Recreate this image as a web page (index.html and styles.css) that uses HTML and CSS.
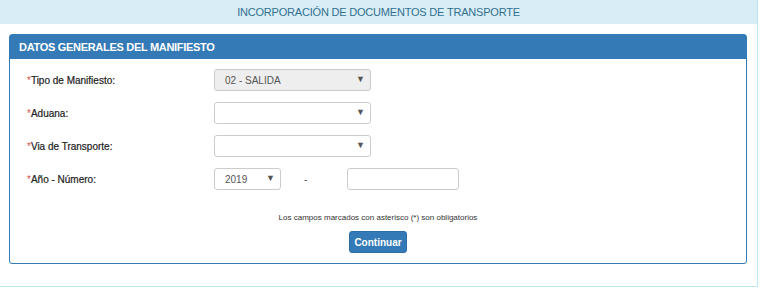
FILE: index.html
```html
<!DOCTYPE html>
<html lang="es">
<head>
    <meta charset="UTF-8">
    <title>Incorporación de Documentos de Transporte</title>
    <link rel="stylesheet" href="styles.css">
</head>
<body>

<div class="page">
    <div class="page-heading">INCORPORACIÓN DE DOCUMENTOS DE TRANSPORTE</div>

    <div class="page-body">
        <div class="card">
            <div class="card-heading">DATOS GENERALES DEL MANIFIESTO</div>

            <form class="card-body" id="manifiesto">
                <div class="row">
                    <label for="tipo"><span class="req">*</span>Tipo de Manifiesto:</label>
                    <div class="select wide">
                        <select id="tipo" disabled>
                            <option>02 - SALIDA</option>
                        </select>
                    </div>
                </div>

                <div class="row">
                    <label for="aduana"><span class="req">*</span>Aduana:</label>
                    <div class="select wide">
                        <select id="aduana">
                            <option></option>
                        </select>
                    </div>
                </div>

                <div class="row">
                    <label for="via"><span class="req">*</span>Via de Transporte:</label>
                    <div class="select wide">
                        <select id="via">
                            <option></option>
                        </select>
                    </div>
                </div>

                <div class="row">
                    <label for="anio"><span class="req">*</span>Año - Número:</label>
                    <div class="pair">
                        <div class="select short">
                            <select id="anio">
                                <option>2019</option>
                            </select>
                        </div>
                        <span class="dash">-</span>
                        <input type="text" id="numero" class="text">
                    </div>
                </div>

                <p class="note">Los campos marcados con asterisco (*) son obligatorios</p>

                <div class="actions">
                    <button type="submit" class="btn">Continuar</button>
                </div>
            </form>
        </div>
    </div>
</div>

</body>
</html>
```

FILE: styles.css
```css
body {
    margin: 0;
    font-family: "Liberation Sans", Arial, sans-serif;
    color: #333;
    background: #fff;
}
.page {
    width: 757px;
    height: 286px;
    margin: -1px 0 0 -1px;
    border: 1px solid #bce8f1;
}
.page-heading {
    height: 24px;
    line-height: 24px;
    background: #d9edf7;
    color: #31708f;
    font-size: 11px;
    letter-spacing: -0.2px;
    text-align: center;
}
.page-body {
    padding: 10px 10px 0 9px;
}
.card {
    border: 1px solid #337ab7;
    border-radius: 3px;
}
.card-heading {
    height: 24px;
    line-height: 24px;
    padding-left: 9px;
    background: #337ab7;
    color: #fff;
    font-size: 11px;
    font-weight: bold;
    letter-spacing: -0.3px;
}
.card-body {
    margin: 0;
    padding: 10px 17px 10px 17px;
}
.row {
    display: grid;
    grid-template-columns: 187px auto;
    align-items: center;
    height: 22px;
    margin-bottom: 11px;
}
.row label {
    font-size: 10px;
    color: #222;
    -webkit-text-stroke: 0.2px #222;
}
.row label .req {
    color: #d9534f;
    -webkit-text-stroke: 0;
}
.select {
    position: relative;
}
.select select {
    display: block;
    width: 100%;
    height: 22px;
    padding: 0 0 0 10px;
    border: 1px solid #ccc;
    border-radius: 3px;
    background: #fff;
    color: #555;
    font-family: inherit;
    font-size: 10px;
    -webkit-appearance: none;
    appearance: none;
    opacity: 1;
}
.select select:disabled {
    background: #eee;
}
.select::after {
    content: "\25BC";
    position: absolute;
    right: 6px;
    top: 5px;
    font-size: 9px;
    color: #555;
    pointer-events: none;
}
.wide {
    width: 157px;
}
.short {
    width: 67px;
}
.pair {
    display: flex;
    align-items: center;
}
.dash {
    width: 66px;
    padding-left: 23px;
    box-sizing: border-box;
    font-size: 10px;
    color: #555;
}
.text {
    width: 112px;
    height: 22px;
    box-sizing: border-box;
    border: 1px solid #ccc;
    border-radius: 3px;
    padding: 0 6px;
    font-family: inherit;
    font-size: 10px;
}
.note {
    margin: 23px 0 9px 0;
    text-align: center;
    font-size: 8px;
    color: #333;
}
.actions {
    text-align: center;
}
.btn {
    width: 58px;
    height: 22px;
    padding: 0;
    border: 1px solid #2e6da4;
    border-radius: 3px;
    background: #337ab7;
    color: #fff;
    font-family: inherit;
    font-size: 10px;
    font-weight: bold;
    cursor: pointer;
}
```
